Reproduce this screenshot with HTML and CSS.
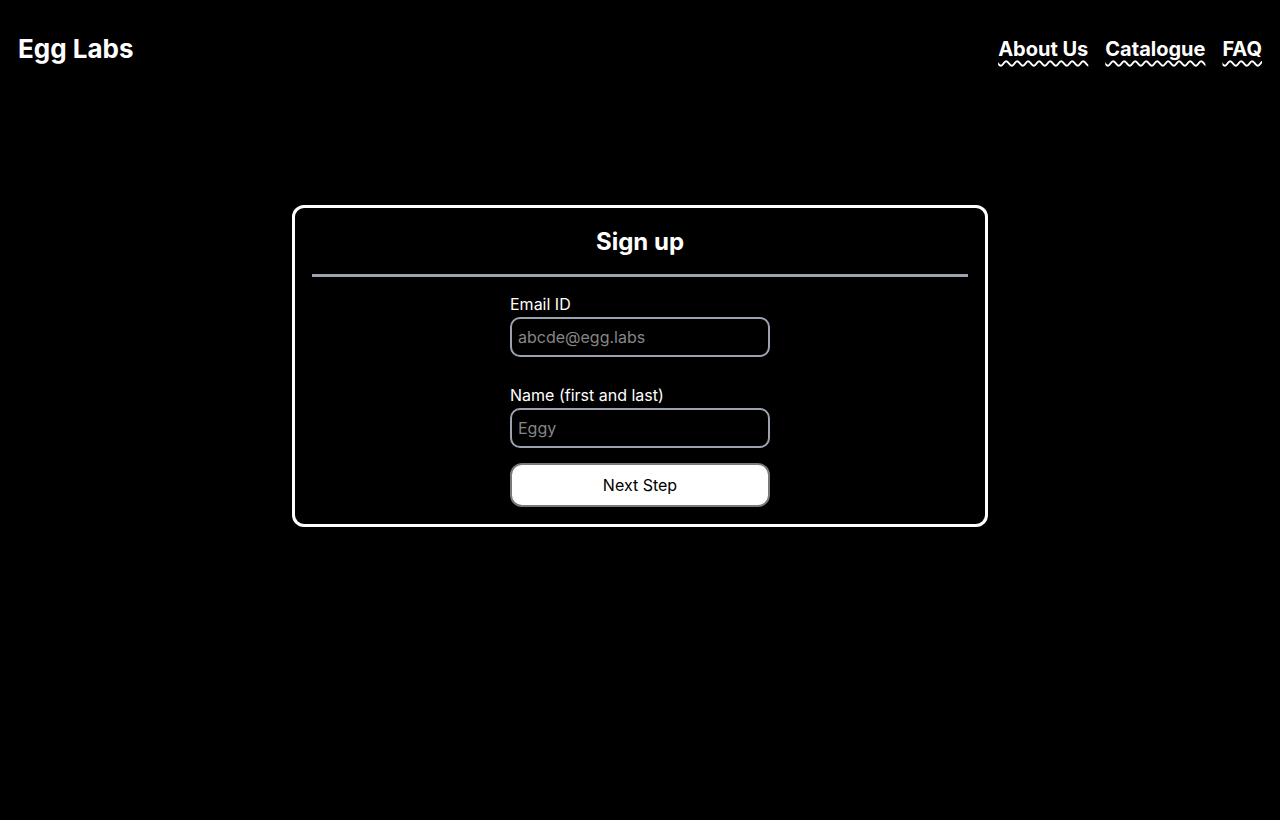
FILE: index.html
```
<!DOCTYPE html>
<html lang="en">
<head>
<meta charset="utf-8">
<title>Egg Labs - Sign up</title>
<link rel="stylesheet" href="styles.css">
</head>
<body>
<header class="site-header">
  <div class="logo">Egg Labs</div>
  <nav class="nav">
    <a href="#" class="nav-link">About Us</a>
    <a href="#" class="nav-link">Catalogue</a>
    <a href="#" class="nav-link">FAQ</a>
  </nav>
</header>
<main class="main">
  <form class="card">
    <h1 class="card-title">Sign up</h1>
    <hr class="divider">
    <div class="fields">
      <label class="field">
        <span class="label">Email ID</span>
        <input class="input" type="text" placeholder="abcde@egg.labs">
      </label>
      <label class="field field-second">
        <span class="label">Name (first and last)</span>
        <input class="input" type="text" placeholder="Eggy">
      </label>
      <button class="button" type="button">Next Step</button>
    </div>
  </form>
</main>
</body>
</html>
```
FILE: styles.css
```
* { box-sizing: border-box; }
html, body {
  margin: 0;
  background: #000;
  color: #fff;
  font-family: Inter, "Noto Sans", "Liberation Sans", sans-serif;
}
.site-header {
  display: flex;
  justify-content: space-between;
  align-items: center;
  padding: 31px 18px 29px;
  height: 96px;
}
.logo {
  font-size: 26px;
  font-weight: 700;
  line-height: 36px;
}
.nav {
  display: flex;
  gap: 17px;
  align-items: center;
}
.nav-link {
  color: #fff;
  font-size: 20px;
  font-weight: 700;
  line-height: 36px;
  text-decoration: underline wavy #fff;
  text-decoration-thickness: 1.5px;
  text-underline-offset: 4px;
}
.main {
  display: flex;
  justify-content: center;
  padding-top: 109px;
}
.card {
  width: 696px;
  height: 322px;
  border: 3px solid #fff;
  border-radius: 12px;
  padding: 19px 17px 0;
  margin: 0;
}
.card-title {
  margin: 0;
  text-align: center;
  font-size: 24px;
  font-weight: 700;
  line-height: 30px;
}
.divider {
  margin: 17px 0 0;
  border: 0;
  height: 3px;
  background: #9ca3af;
}
.fields {
  width: 260px;
  margin: 17px auto 0;
  display: flex;
  flex-direction: column;
}
.field {
  display: flex;
  flex-direction: column;
  gap: 3px;
}
.field-second { margin-top: 28px; }
.label {
  font-size: 16px;
  line-height: 20px;
}
.input {
  height: 40px;
  width: 100%;
  background: #000;
  color: #fff;
  border: 2px solid #9ca3af;
  border-radius: 10px;
  padding: 0 6px;
  font-family: inherit;
  font-size: 16px;
  outline: none;
}
.input::placeholder { color: #868686; }
.button {
  margin-top: 15px;
  height: 44px;
  width: 100%;
  background: #fff;
  color: #000;
  border: 2px solid #7a7a7a;
  border-radius: 12px;
  font-family: inherit;
  font-size: 16px;
}
```
